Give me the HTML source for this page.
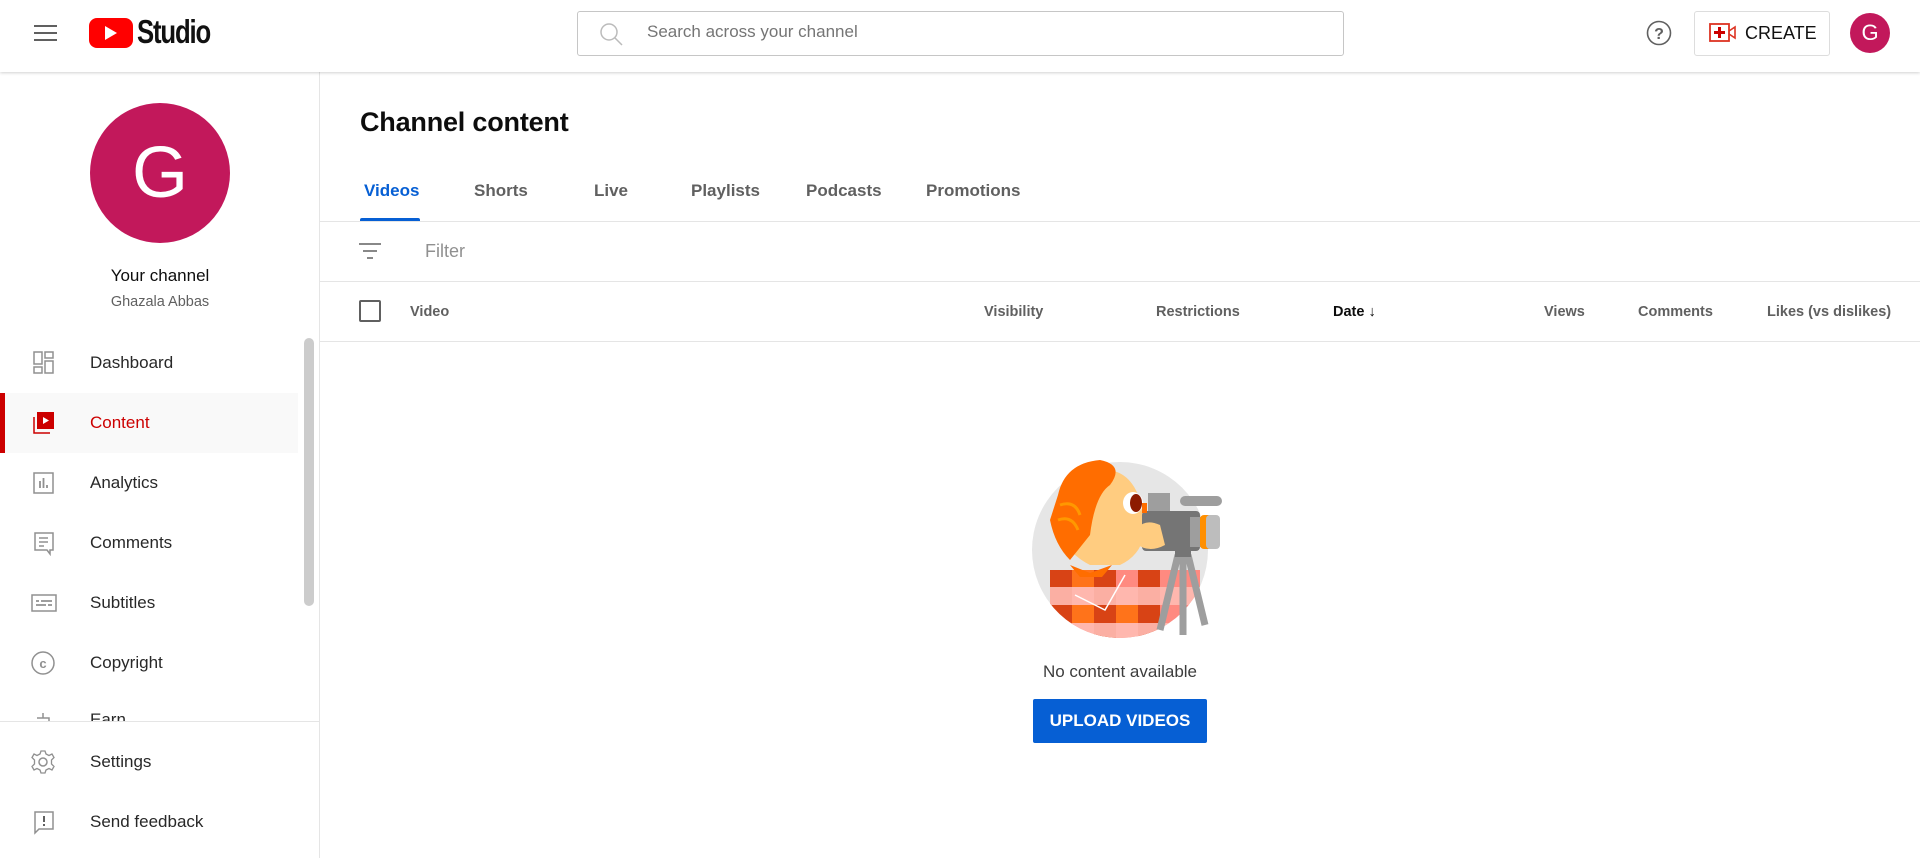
<!DOCTYPE html>
<html><head><meta charset="utf-8"><style>
*{box-sizing:border-box;margin:0;padding:0}
body{width:1920px;height:858px;overflow:hidden;background:#fff;font-family:"Liberation Sans",sans-serif;color:#0d0d0d;position:relative}
.a{position:absolute}
.hdr{left:0;top:0;width:1920px;height:72px;background:#fff;box-shadow:0 1px 3px rgba(0,0,0,.18);z-index:3}
.nav{left:0;width:320px;height:60px;display:flex;align-items:center;font-size:17px;color:#282828;font-weight:500}
.nav svg{position:absolute;left:30px}
.nav span{position:absolute;left:90px}
.th{top:304px;font-size:14.5px;color:#606060;font-weight:bold}
.tab{top:181px;font-size:17px;color:#606060;font-weight:bold}
</style></head><body>
<div class="a hdr">
 <div class="a" style="left:34px;top:25px;width:23px;height:2px;background:#606060"></div>
 <div class="a" style="left:34px;top:32px;width:23px;height:2px;background:#606060"></div>
 <div class="a" style="left:34px;top:39px;width:23px;height:2px;background:#606060"></div>
 <div class="a" style="left:89px;top:18px;width:44px;height:30px;background:#f00;border-radius:8px"></div>
 <svg class="a" style="left:103px;top:25px" width="16" height="16"><path d="M2 1L14 8L2 15Z" fill="#fff"/></svg>
 <div class="a" style="left:137px;top:13px;font-size:33px;font-weight:bold;letter-spacing:-1.5px;transform:scaleX(.78);transform-origin:left;color:#111">Studio</div>
 <div class="a" style="left:577px;top:11px;width:767px;height:45px;border:1px solid #c6c6c6;border-radius:3px"></div>
 <svg class="a" style="left:597px;top:20px" width="28" height="28"><circle cx="12" cy="12" r="8" fill="none" stroke="#bbb" stroke-width="1.5"/><path d="M18 18L25 25" stroke="#bbb" stroke-width="1.5"/></svg>
 <div class="a" style="left:647px;top:22px;font-size:17px;color:#757575">Search across your channel</div>
 <svg class="a" style="left:1646px;top:20px" width="26" height="26"><circle cx="13" cy="13" r="11.5" fill="none" stroke="#606060" stroke-width="1.6"/><text x="13" y="19" text-anchor="middle" font-size="16" font-family="Liberation Sans" fill="#606060" font-weight="bold">?</text></svg>
 <div class="a" style="left:1694px;top:11px;width:136px;height:45px;border:1px solid #ddd;border-radius:3px"></div>
 <svg class="a" style="left:1709px;top:22px" width="28" height="22"><rect x="1" y="2" width="19" height="17" fill="none" stroke="#d32" stroke-width="1.8"/><path d="M20 9L26 5V16L20 12" fill="none" stroke="#d32" stroke-width="1.6"/><path d="M10.5 5V16M5 10.5H16" stroke="#c00" stroke-width="3"/></svg>
 <div class="a" style="left:1745px;top:23px;font-size:18px;color:#111">CREATE</div>
 <div class="a" style="left:1850px;top:13px;width:40px;height:40px;border-radius:50%;background:#c2185b;color:#fff;font-size:22px;text-align:center;line-height:40px">G</div>
</div>
<div class="a" style="left:319px;top:72px;width:1px;height:786px;background:#e5e5e5"></div>
<div class="a" style="left:90px;top:103px;width:140px;height:140px;border-radius:50%;background:#c2185b;color:#fff;font-size:72px;text-align:center;line-height:140px">G</div>
<div class="a" style="left:0;width:320px;top:266px;text-align:center;font-size:17px;font-weight:500">Your channel</div>
<div class="a" style="left:0;width:320px;top:294px;text-align:center;font-size:14.5px;color:#606060">Ghazala Abbas</div>
<div class="a" style="left:304px;top:338px;width:10px;height:268px;background:#ccc;border-radius:5px"></div>
<div class="a nav" style="top:333px"><svg width="26" height="26"><g fill="none" stroke="#909090" stroke-width="1.5"><rect x="4" y="2" width="8" height="12"/><rect x="4" y="17" width="8" height="6"/><rect x="15" y="2" width="8" height="6"/><rect x="15" y="11" width="8" height="12"/></g></svg><span>Dashboard</span></div>
<div class="a" style="left:0;top:393px;width:298px;height:60px;background:#f9f9f9"></div>
<div class="a" style="left:0;top:393px;width:5px;height:60px;background:#c00"></div>
<div class="a nav" style="top:393px;color:#c00"><svg width="26" height="26"><path d="M4 7V23H20" fill="none" stroke="#c00" stroke-width="1.5"/><rect x="7" y="2" width="17" height="17" fill="#c00"/><path d="M13 7L19 10.5L13 14Z" fill="#fff"/></svg><span>Content</span></div>
<div class="a nav" style="top:453px"><svg width="26" height="26"><rect x="4" y="3" width="19" height="20" fill="none" stroke="#909090" stroke-width="1.5"/><path d="M10 11V18M13.5 8V18M17 15V18" stroke="#909090" stroke-width="1.8"/></svg><span>Analytics</span></div>
<div class="a nav" style="top:513px"><svg width="26" height="26"><path d="M5 3H23V20H20V24L17 20H5Z" fill="none" stroke="#909090" stroke-width="1.5"/><path d="M9 8H18M9 12H18M9 16H14" stroke="#909090" stroke-width="1.5"/></svg><span>Comments</span></div>
<div class="a nav" style="top:573px"><svg width="28" height="26"><rect x="2" y="5" width="24" height="16" fill="none" stroke="#909090" stroke-width="1.5"/><path d="M6 11H9M11 11H22M6 15H16M18 15H22" stroke="#909090" stroke-width="1.8"/></svg><span>Subtitles</span></div>
<div class="a nav" style="top:633px"><svg width="26" height="26"><circle cx="13" cy="13" r="11" fill="none" stroke="#909090" stroke-width="1.5"/><text x="13" y="18" text-anchor="middle" font-size="13" font-family="Liberation Sans" font-weight="bold" fill="#909090">c</text></svg><span>Copyright</span></div>
<div class="a" style="left:0;top:693px;width:319px;height:28px;overflow:hidden"><div class="a nav" style="top:0"><svg width="26" height="26" style="top:17px"><path d="M13 3V8M7 8H19V22" fill="none" stroke="#909090" stroke-width="1.5"/></svg><span style="top:17px">Earn</span></div></div>
<div class="a" style="left:0;top:721px;width:319px;height:1px;background:#e5e5e5"></div>
<div class="a nav" style="top:732px"><svg width="26" height="26"><circle cx="13" cy="13" r="4" fill="none" stroke="#909090" stroke-width="1.5"/><path d="M11 2H15L16 5L19 6.5L22 5L24 8.5L21.5 11V15L24 17.5L22 21L19 19.5L16 21L15 24H11L10 21L7 19.5L4 21L2 17.5L4.5 15V11L2 8.5L4 5L7 6.5L10 5Z" fill="none" stroke="#909090" stroke-width="1.3"/></svg><span>Settings</span></div>
<div class="a nav" style="top:792px"><svg width="26" height="26"><path d="M5 3H23V20H9L5 24Z" fill="none" stroke="#909090" stroke-width="1.5"/><path d="M14 7V13M14 15V17" stroke="#606060" stroke-width="2"/></svg><span>Send feedback</span></div>
<div class="a" style="left:360px;top:107px;font-size:27px;font-weight:bold;color:#0d0d0d;letter-spacing:-.2px">Channel content</div>
<div class="a tab" style="left:364px;color:#065fd4">Videos</div>
<div class="a tab" style="left:474px">Shorts</div>
<div class="a tab" style="left:594px">Live</div>
<div class="a tab" style="left:691px">Playlists</div>
<div class="a tab" style="left:806px">Podcasts</div>
<div class="a tab" style="left:926px">Promotions</div>
<div class="a" style="left:360px;top:218px;width:60px;height:4px;background:#065fd4;border-radius:2px 2px 0 0"></div>
<div class="a" style="left:320px;top:221px;width:1600px;height:1px;background:#e5e5e5"></div>
<svg class="a" style="left:357px;top:241px" width="26" height="22"><path d="M2 3H24M6 10H20M10 17H16" stroke="#606060" stroke-width="1.6"/></svg>
<div class="a" style="left:425px;top:241px;font-size:18px;color:#909090">Filter</div>
<div class="a" style="left:320px;top:281px;width:1600px;height:1px;background:#e5e5e5"></div>
<div class="a" style="left:359px;top:300px;width:22px;height:22px;border:2px solid #606060;border-radius:2px"></div>
<div class="a th" style="left:410px">Video</div>
<div class="a th" style="left:984px">Visibility</div>
<div class="a th" style="left:1156px">Restrictions</div>
<div class="a th" style="left:1333px;color:#0d0d0d">Date ↓</div>
<div class="a th" style="left:1544px">Views</div>
<div class="a th" style="left:1638px">Comments</div>
<div class="a th" style="left:1767px">Likes (vs dislikes)</div>
<div class="a" style="left:320px;top:341px;width:1600px;height:1px;background:#e5e5e5"></div>
<svg class="a" style="left:1030px;top:445px" width="212" height="200" viewBox="0 0 212 200">
<defs><clipPath id="c"><circle cx="90" cy="105" r="88"/><rect x="0" y="0" width="120" height="110"/></clipPath></defs>
<circle cx="90" cy="105" r="88" fill="#e6e6e6"/>
<g clip-path="url(#c)">
<rect x="20" y="125" width="150" height="80" fill="#ff8a80"/>
<g fill="#d84315"><rect x="20" y="125" width="22" height="80"/><rect x="64" y="125" width="22" height="80"/><rect x="108" y="125" width="22" height="80"/></g>
<g fill="#ffbcb3" opacity=".9"><rect x="20" y="142" width="150" height="18"/><rect x="20" y="178" width="150" height="18"/></g>
<g fill="#ff6d00" opacity=".8"><rect x="42" y="125" width="22" height="17"/><rect x="86" y="160" width="22" height="18"/><rect x="42" y="160" width="22" height="18"/></g>
<path d="M45 150L75 165L95 130" fill="none" stroke="#fff" stroke-width="1.5"/>
<path d="M40 120L60 128L82 120L72 132L50 132Z" fill="#ff6d00"/>
<path d="M30 55Q40 30 75 25Q100 25 110 55L115 85Q112 110 90 120L60 120Q40 110 30 90Z" fill="#ffcc80"/>
<path d="M28 50Q35 18 70 15Q95 20 80 40Q65 50 60 90L40 115Q25 100 20 75Z" fill="#ff6d00"/>
<path d="M30 60Q45 55 50 70M28 75Q42 70 48 85" stroke="#ff9800" stroke-width="3" fill="none"/>
<ellipse cx="103" cy="58" rx="10" ry="11" fill="#fff"/><ellipse cx="106" cy="58" rx="6" ry="9" fill="#8d1b00"/>
</g>
<path d="M148 110L130 185M153 110L153 190M158 110L175 180" stroke="#9e9e9e" stroke-width="7"/>
<rect x="145" y="100" width="16" height="12" fill="#757575"/>
<rect x="150" y="51" width="42" height="10" rx="5" fill="#9e9e9e"/>
<rect x="118" y="48" width="22" height="20" fill="#9e9e9e"/>
<rect x="112" y="66" width="58" height="40" rx="4" fill="#757575"/>
<rect x="160" y="72" width="22" height="30" fill="#9e9e9e"/>
<rect x="170" y="70" width="12" height="34" rx="4" fill="#ff8f00"/>
<rect x="176" y="70" width="14" height="34" rx="4" fill="#bdbdbd"/>
<rect x="112" y="58" width="5" height="10" fill="#ff6d00"/>
<path d="M105 88Q112 72 130 80L135 100Q120 108 108 100Z" fill="#ffcc80"/>
</svg>
<div class="a" style="left:1020px;width:200px;top:662px;text-align:center;font-size:17px;color:#3d3d3d">No content available</div>
<div class="a" style="left:1033px;top:699px;width:174px;height:44px;background:#065fd4;border-radius:2px;color:#fff;font-size:17px;font-weight:bold;text-align:center;line-height:44px">UPLOAD VIDEOS</div>
</body></html>
